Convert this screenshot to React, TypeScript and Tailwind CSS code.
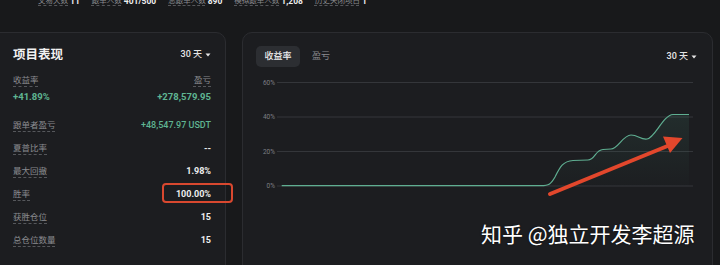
import React from "react"

const stats = [
	{ label: "交易天数", value: "11" },
	{ label: "跟单人数", value: "401/500" },
	{ label: "总跟单人数", value: "890" },
	{ label: "模拟跟单人数", value: "1,208" },
	{ label: "历史关闭项目", value: "1" },
]

const rows = [
	{ label: "夏普比率", value: "--" },
	{ label: "最大回撤", value: "1.98%" },
	{ label: "胜率", value: "100.00%" },
	{ label: "获胜仓位", value: "15" },
	{ label: "总仓位数量", value: "15" },
]

const font = {
	fontFamily: '"Roboto", "Noto Sans CJK SC", sans-serif',
}

function Label({ children }: { children: React.ReactNode }) {
	return (
		<span className="text-[8.5px] text-[#8b8c90] underline decoration-dashed decoration-[#55575b] underline-offset-[3px]">
			{children}
		</span>
	)
}

function Caret() {
	return (
		<svg width="6" height="4" viewBox="0 0 6 4" className="ml-[3px]">
			<path d="M0.5 0.5 L5.5 0.5 L3 3.5 Z" fill="#e5e5e5" />
		</svg>
	)
}

function Chart() {
	const grid = [
		{ y: 10.5, t: "60%" },
		{ y: 45, t: "40%" },
		{ y: 79.5, t: "20%" },
		{ y: 114, t: "0%" },
	]
	const line =
		"M38.7 113.7 L298 113.7 C306 113.7 308 112 312 105 C317 95 320 89 330 88.5 L345 88 C352 88 352 78 360 77.5 L368 77 C375 77 380 63 388 63 C395 63 398 68 404 67 C412 66 420 43 430 42.5 L446 42.5"
	return (
		<svg width="469" height="130" viewBox="0 0 469 130" className="block">
			<defs>
				<linearGradient id="fill" x1="0" y1="0" x2="0" y2="1">
					<stop offset="0" stopColor="#4fa386" stopOpacity="0.12" />
					<stop offset="1" stopColor="#4fa386" stopOpacity="0.01" />
				</linearGradient>
			</defs>
			{grid.map((g) => (
				<g key={g.t}>
					<line x1="34" x2="450" y1={g.y} y2={g.y} stroke="#34363a" strokeWidth="1" />
					<text
						x="32"
						y={g.y + 2.2}
						textAnchor="end"
						fontSize="6.5"
						fill="#7d7f84"
						fontFamily="Roboto, sans-serif"
					>
						{g.t}
					</text>
				</g>
			))}
			<path d={line + " L446 114 L38.7 114 Z"} fill="url(#fill)" />
			<path d={line} fill="none" stroke="#5fae91" strokeWidth="1.2" />
			{/* red annotation arrow */}
			<path d="M307 122 L427 73" stroke="#e2472c" strokeWidth="4" strokeLinecap="round" />
			<path d="M439.5 66 L420 64.5 L427 81 Z" fill="#e2472c" />
		</svg>
	)
}

export default function App() {
	return (
		<div
			className="relative w-[720px] h-[265px] overflow-hidden bg-[#18191b] text-[#e8e8e8]"
			style={font}
		>
			{/* top stats, mostly scrolled out of view */}
			<div className="h-[32px] overflow-hidden">
				<div className="-mt-[4px] flex h-[10px] gap-[12px] pl-[38px] leading-[10px]">
					{stats.map((s) => (
						<div key={s.label} className="flex items-center gap-[2px]">
							<span className="text-[7.5px] text-[#8b8c90] underline decoration-dashed decoration-[#55575b] underline-offset-[2px]">
								{s.label}
							</span>
							<span className="text-[8.5px] font-bold text-[#eeeeee]">{s.value}</span>
						</div>
					))}
				</div>
			</div>

			<div className="flex gap-4">
				{/* left card */}
				<div className="-ml-[10px] h-[250px] w-[236px] rounded-[10px] border border-[#2b2c30] bg-[#1c1d20] pl-[22px] pr-[14px] pt-[12px]">
					<div className="flex h-[20px] items-center justify-between">
						<span className="text-[12.5px] font-bold text-[#f2f2f2]">项目表现</span>
						<span className="flex items-center text-[9px] font-medium text-[#e5e5e5]">
							30 天
							<Caret />
						</span>
					</div>
					<div className="mt-[7px] flex h-[16px] items-center justify-between">
						<Label>收益率</Label>
						<Label>盈亏</Label>
					</div>
					<div className="mt-[1px] flex h-[16px] items-center justify-between text-[9.5px] font-bold text-[#5fb592]">
						<span>+41.89%</span>
						<span>+278,579.95</span>
					</div>
					<div className="mt-[9px] flex h-[23px] items-center justify-between">
						<Label>跟单者盈亏</Label>
						<span className="text-[9px] font-medium text-[#5fb592]">+48,547.97 USDT</span>
					</div>
					{rows.map((r) => (
						<div key={r.label} className="flex h-[23px] items-center justify-between">
							<Label>{r.label}</Label>
							<span className="text-[9px] font-bold text-[#eeeeee]">{r.value}</span>
						</div>
					))}
				</div>

				{/* right card */}
				<div className="h-[250px] w-[471px] rounded-[10px] border border-[#2b2c30] bg-[#1c1d20] pt-[13px]">
					<div className="flex h-[21px] items-center justify-between pl-[13px] pr-[15px]">
						<div className="flex h-full items-center">
							<span className="flex h-[21px] w-[44px] items-center justify-center rounded-[5px] bg-[#2c2e32] text-[9px] font-medium text-[#f0f0f0]">
								收益率
							</span>
							<span className="ml-[12px] text-[9px] text-[#8b8c90]">盈亏</span>
						</div>
						<span className="flex items-center text-[9px] font-medium text-[#e5e5e5]">
							30 天
							<Caret />
						</span>
					</div>
					<div className="mt-[5px]">
						<Chart />
					</div>
				</div>
			</div>

			{/* annotation box */}
			<div className="absolute left-[162px] top-[183px] h-[20px] w-[71px] rounded-[4px] border-2 border-[#d9482f]" />

			{/* watermark */}
			<div
				className="absolute left-[481px] top-[220px] text-[21px] leading-[26px] text-white"
				style={{ fontFamily: '"Noto Sans CJK SC", sans-serif', textShadow: "0 0 2px rgba(0,0,0,0.6)" }}
			>
				知乎 @独立开发李超源
			</div>
		</div>
	)
}
